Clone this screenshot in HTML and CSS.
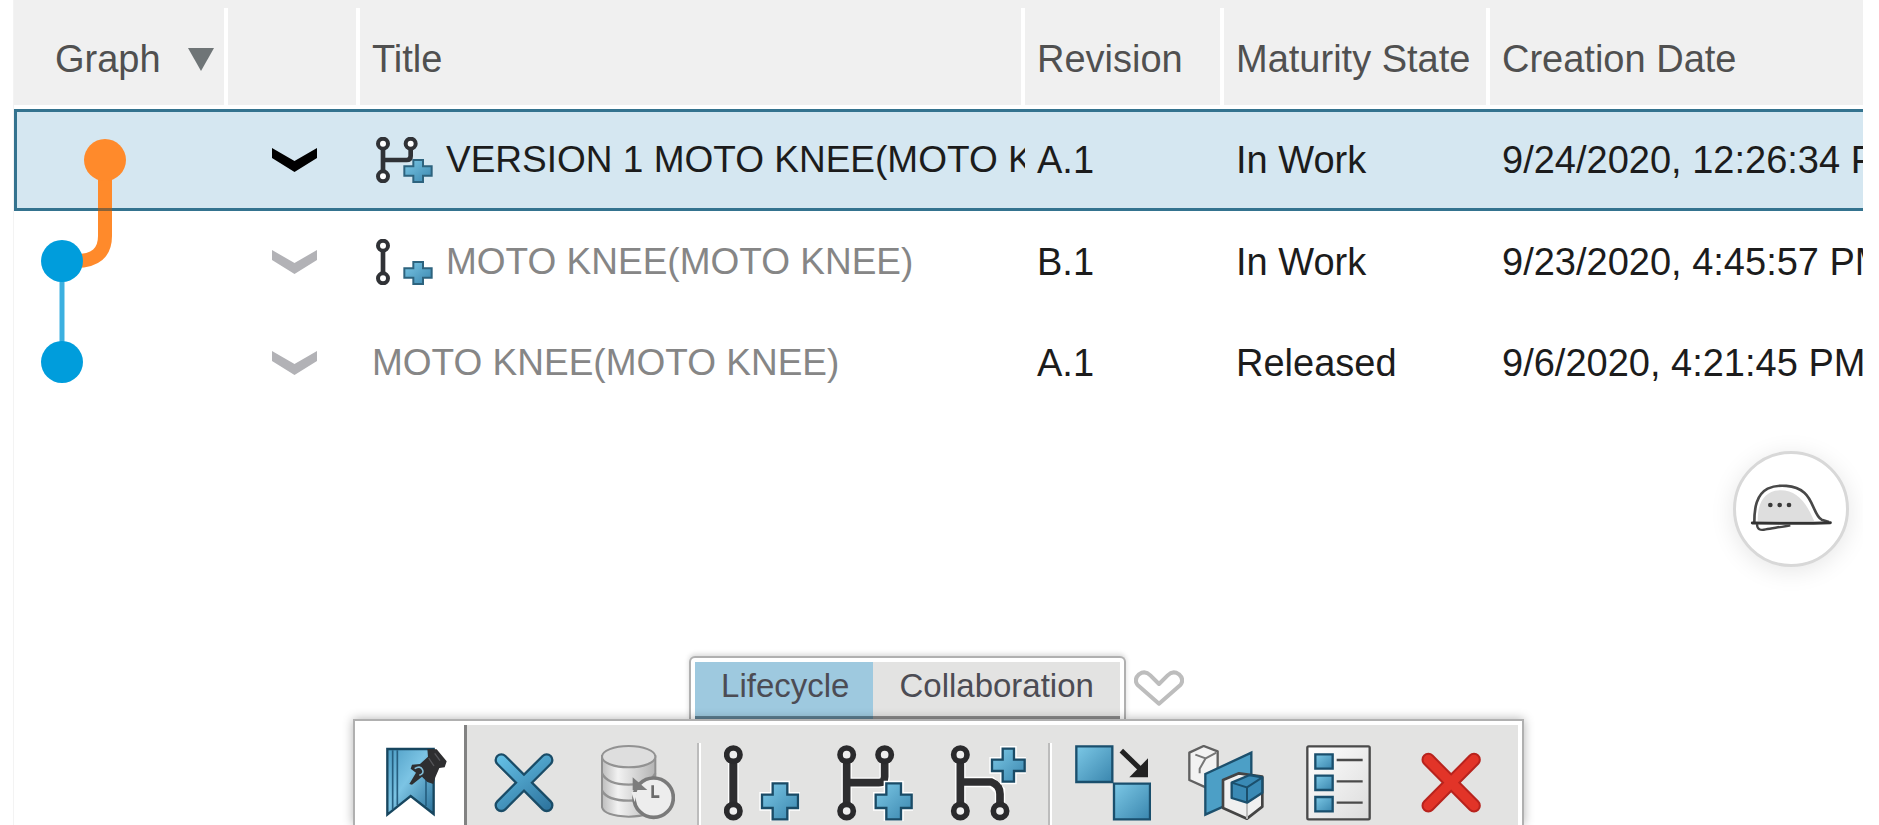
FILE: index.html
```html
<!DOCTYPE html>
<html lang="en">
<head>
<meta charset="utf-8">
<title>Revisions</title>
<link rel="stylesheet" href="styles.css">
</head>
<body>
<svg class="defs" aria-hidden="true">
  <defs>
    <linearGradient id="blue" x1="0" y1="0" x2="1" y2="1"><stop offset="0" stop-color="#7cc8e6"/><stop offset="1" stop-color="#3a86ae"/></linearGradient>
    <linearGradient id="cross" gradientUnits="userSpaceOnUse" x1="490" y1="340" x2="610" y2="515"><stop offset="0" stop-color="#64c0e6"/><stop offset="1" stop-color="#2f76a0"/></linearGradient>
    <linearGradient id="ribbon" x1="0" y1="0" x2="1" y2="1"><stop offset="0" stop-color="#4c9cc4"/><stop offset=".45" stop-color="#7cc4e4"/><stop offset="1" stop-color="#2a7099"/></linearGradient>
    <linearGradient id="steel" x1="0" y1="0" x2="1" y2="0"><stop offset="0" stop-color="#bdbdbd"/><stop offset=".3" stop-color="#f2f2f2"/><stop offset="1" stop-color="#b4b4b4"/></linearGradient>
    <linearGradient id="paper" x1="0" y1="0" x2="1" y2="1"><stop offset="0" stop-color="#ffffff"/><stop offset="1" stop-color="#dcdcdc"/></linearGradient>
    <symbol id="chevron" viewBox="0 0 45 24"><path d="M0 0 22.500 13 45 0V10L22.500 24 0 10Z" fill="currentColor"/></symbol>
  </defs>
</svg>
<main class="panel">
  <table class="grid">
    <colgroup><col class="c-graph"><col class="c-menu"><col class="c-title"><col class="c-rev"><col class="c-state"><col></colgroup>
    <thead>
      <tr>
        <th class="graph-head"><button class="sort" type="button">Graph<svg width="26" height="23" viewBox="0 0 26 23" aria-hidden="true"><path d="M0 0H26L13 23Z" fill="#6f7577"/></svg></button></th>
        <th></th><th>Title</th><th>Revision</th><th>Maturity State</th><th>Creation Date</th>
      </tr>
    </thead>
    <tbody>
      <tr class="selected">
        <td class="graph">
          <svg class="tree" width="210" height="303" viewBox="13 109 210 303" role="img" aria-label="Revision graph">
            <path d="M62 261V362" stroke="#3cb0e0" stroke-width="5"/>
            <path d="M105 160V236Q105 261 76 261" fill="none" stroke="#ff8a2b" stroke-width="14"/>
            <path d="M98 209.500H112" stroke="#8a6238" stroke-width="3"/>
            <circle cx="105" cy="160" r="21" fill="#ff8a2b"/>
            <circle cx="62" cy="261" r="21" fill="#009ddc"/>
            <circle cx="62" cy="362" r="21" fill="#009ddc"/>
          </svg>
        </td>
        <td class="menu"><button type="button" aria-label="Row menu"><svg width="45" height="24"><use href="#chevron"/></svg></button></td>
        <td><div class="title"><svg width="62" height="46" viewBox="41 55 186 138" aria-hidden="true">
          <path d="M74 82V166M74 124H145Q157 124 157 112V82" fill="none" stroke="#303236" stroke-width="14"/>
          <g fill="#fff" stroke="#303236" stroke-width="12"><circle cx="74" cy="75" r="15"/><circle cx="157" cy="75" r="15"/><circle cx="74" cy="173" r="15"/></g>
          <path d="M165 124H194V143H220V171H194V190H165V171H138V143H165Z" fill="url(#blue)" stroke="#2d637e" stroke-width="6"/>
        </svg><span>VERSION 1 MOTO KNEE(MOTO KNEE)</span></div></td>
        <td>A.1</td><td>In Work</td><td>9/24/2020, 12:26:34 PM</td>
      </tr>
      <tr class="muted">
        <td></td>
        <td class="menu"><button type="button" aria-label="Row menu"><svg width="45" height="24"><use href="#chevron"/></svg></button></td>
        <td><div class="title"><svg width="62" height="46" viewBox="41 55 186 138" aria-hidden="true">
          <path d="M74 82V166" stroke="#303236" stroke-width="14"/>
          <g fill="#fff" stroke="#303236" stroke-width="12"><circle cx="74" cy="75" r="15"/><circle cx="74" cy="173" r="15"/></g>
          <path d="M165 124H194V143H220V171H194V190H165V171H138V143H165Z" fill="url(#blue)" stroke="#2d637e" stroke-width="6"/>
        </svg><span>MOTO KNEE(MOTO KNEE)</span></div></td>
        <td>B.1</td><td>In Work</td><td>9/23/2020, 4:45:57 PM</td>
      </tr>
      <tr class="muted">
        <td></td>
        <td class="menu"><button type="button" aria-label="Row menu"><svg width="45" height="24"><use href="#chevron"/></svg></button></td>
        <td><div class="title"><span>MOTO KNEE(MOTO KNEE)</span></div></td>
        <td>A.1</td><td>Released</td><td>9/6/2020, 4:21:45 PM</td>
      </tr>
    </tbody>
  </table>

  <button class="helper" type="button" aria-label="Assistant">
    <svg width="110" height="110" viewBox="167 100 330 330" aria-hidden="true">
      <path d="M222 305C222 262 228 222 262 204C292 190 344 192 372 216C400 240 402 286 424 297L448 302V309H222Z" fill="#fff"/>
      <path d="M232 302C232 262 240 222 284 210C340 202 372 232 402 302Z" fill="#dedede"/>
      <path d="M222 305C222 262 228 222 262 204C292 190 344 192 372 216C400 240 402 286 424 297L446 304" fill="none" stroke="#484848" stroke-width="8"/>
      <path d="M216 307L400 308L450 306" fill="none" stroke="#333" stroke-width="9" stroke-linecap="round"/>
      <path d="M230 310C230 326 240 330 256 326C280 322 308 318 330 314" fill="none" stroke="#444" stroke-width="7"/>
      <g fill="#3a3a3a"><circle cx="270" cy="253" r="7"/><circle cx="298" cy="253" r="7"/><circle cx="326" cy="253" r="7"/></g>
    </svg>
  </button>

  <section class="dock">
    <div class="tabrow">
      <div class="tabs" role="tablist">
        <button class="tab active" role="tab" aria-selected="true" type="button">Lifecycle</button>
        <button class="tab" role="tab" aria-selected="false" type="button">Collaboration</button>
      </div>
      <button class="more" type="button" aria-label="More">
        <svg width="50" height="36" viewBox="279 88 150 108"><path d="M354 189L289 132Q278 116 294 101Q312 88 328 104L354 130L380 104Q396 88 414 101Q430 116 419 132Z" fill="#fff" stroke="#bdbdbd" stroke-width="12" stroke-linejoin="round"/></svg>
      </button>
    </div>
    <div class="tools" role="toolbar" aria-label="Lifecycle">
      <button class="tool pinned" type="button" aria-label="Pin"><svg viewBox="99 315 228 228">
        <path d="M142 327H281V522L212 468L142 524Z" fill="url(#ribbon)" stroke="#17465f" stroke-width="7"/>
        <path d="M158 331V508M172 331V496M258 420V498" stroke="#265f80" stroke-width="5"/>
        <path d="M262 327L290 328L320 364L314 382L298 384L286 412L280 432L262 426L246 410L216 434L208 432L228 398L212 386L216 374L240 372L264 350Z" fill="#2e2e30"/>
        <path d="M224 386Q240 376 247 388T238 406" fill="none" stroke="#83bdd7" stroke-width="5"/>
        <path d="M266 354L282 378M284 340L300 362" stroke="#56565a" stroke-width="4"/>
      </svg></button>
      <div class="group">
        <button class="tool" type="button" aria-label="Cancel"><svg viewBox="441 315 228 228">
          <path d="M487 360L623 496M623 360L487 496" stroke="#1a4c67" stroke-width="41" stroke-linecap="round"/>
          <path d="M487 360L623 496M623 360L487 496" stroke="url(#cross)" stroke-width="27" stroke-linecap="round"/>
        </svg></button>
        <button class="tool" type="button" aria-label="History"><svg viewBox="789 315 228 228">
          <path d="M798 348V502Q805 528 878 530Q950 528 958 502V348Z" fill="url(#steel)" stroke="#909090" stroke-width="6"/>
          <path d="M798 400Q814 434 878 434T958 400M798 452Q814 482 878 482T958 452" fill="none" stroke="#929292" stroke-width="7"/>
          <ellipse cx="878" cy="350" rx="80" ry="32" fill="#dedede" stroke="#929292" stroke-width="6"/>
          <circle cx="953" cy="473" r="59" fill="#ededed" stroke="#7a7a7a" stroke-width="11"/>
          <path d="M890 412V450H934Z" fill="#7c7c7c"/><path d="M886 456H904L896 486Z" fill="#ededed"/>
          <path d="M950 436V470H970" fill="none" stroke="#6c6c6c" stroke-width="8"/>
        </svg></button>
      </div>
      <div class="group">
        <button class="tool" type="button" aria-label="New version"><svg viewBox="141 315 228 228">
          <path d="M169 352V504" stroke="#fff" stroke-width="32"/><path d="M169 352V504" stroke="#2e2e30" stroke-width="24"/>
          <g fill="#eee" stroke="#2a2a2c" stroke-width="17"><circle cx="169" cy="344" r="20"/><circle cx="169" cy="513" r="20"/></g>
          <path d="M287 430H331V464H363V504H331V538H287V504H255V464H287Z" fill="url(#blue)" stroke="#fff" stroke-width="16"/>
          <path d="M287 430H331V464H363V504H331V538H287V504H255V464H287Z" fill="url(#blue)" stroke="#1a4b66" stroke-width="7"/>
        </svg></button>
        <button class="tool" type="button" aria-label="New branch"><svg viewBox="474 315 228 228">
          <path d="M503 352V504M503 428H600Q617 428 617 410V352" fill="none" stroke="#fff" stroke-width="31"/>
          <path d="M503 352V504M503 428H600Q617 428 617 410V352" fill="none" stroke="#2e2e30" stroke-width="23"/>
          <g fill="#eee" stroke="#2a2a2c" stroke-width="17"><circle cx="503" cy="344" r="20"/><circle cx="617" cy="344" r="20"/><circle cx="503" cy="513" r="20"/></g>
          <path d="M622 430H666V464H698V504H666V538H622V504H590V464H622Z" fill="url(#blue)" stroke="#fff" stroke-width="16"/>
          <path d="M622 430H666V464H698V504H666V538H622V504H590V464H622Z" fill="url(#blue)" stroke="#1a4b66" stroke-width="7"/>
        </svg></button>
        <button class="tool" type="button" aria-label="New from branch"><svg viewBox="816 315 228 228">
          <path d="M847 352V504M847 426H940L966 452V504" fill="none" stroke="#fff" stroke-width="31"/>
          <path d="M847 352V504M847 426H940Q966 436 966 462V504" fill="none" stroke="#2e2e30" stroke-width="23"/>
          <g fill="#eee" stroke="#2a2a2c" stroke-width="17"><circle cx="847" cy="344" r="20"/><circle cx="847" cy="513" r="20"/><circle cx="966" cy="513" r="20"/></g>
          <path d="M974 326H1008V359H1040V393H1008V425H974V393H942V359H974Z" fill="url(#blue)" stroke="#fff" stroke-width="16"/>
          <path d="M974 326H1008V359H1040V393H1008V425H974V393H942V359H974Z" fill="url(#blue)" stroke="#1a4b66" stroke-width="7"/>
        </svg></button>
      </div>
      <div class="group">
        <button class="tool" type="button" aria-label="Replace"><svg viewBox="111 315 228 228">
          <g fill="url(#blue)" stroke="#1a4f6d" stroke-width="7"><path d="M115 319H223V426H115Z"/><path d="M228 431H336V538H228Z"/></g>
          <path d="M250 332L308 388" stroke="#222" stroke-width="15"/><path d="M330 355V412H274Z" fill="#222"/>
        </svg></button>
        <button class="tool" type="button" aria-label="Duplicate"><svg viewBox="447 315 228 228">
          <path d="M451 338L494 318L536 334V420L500 442L451 420Z" fill="#f2f2f2" stroke="#606060" stroke-width="7" stroke-linejoin="round"/>
          <path d="M469 344L500 355L532 338M500 355L482 386V400" fill="none" stroke="#777" stroke-width="6"/>
          <path d="M499 402L637 338V462L499 524Z" fill="#4c9fc6" stroke="#1c506d" stroke-width="7"/>
          <path d="M552 420L600 400L670 410V500L624 536L552 504Z" fill="#f0f0f0" stroke="#444" stroke-width="8" stroke-linejoin="round"/>
          <path d="M624 490V536" stroke="#bdbdbd" stroke-width="6"/>
          <path d="M578 428L632 405L670 412V458L624 488L578 474Z" fill="#3a8ab5" stroke="#1b4f6c" stroke-width="7" stroke-linejoin="round"/>
          <path d="M578 428L624 442L670 412M624 442V486" fill="none" stroke="#1b4f6c" stroke-width="6"/>
        </svg></button>
        <button class="tool" type="button" aria-label="Properties"><svg viewBox="783 315 228 228">
          <rect x="802" y="319" width="187" height="219" rx="4" fill="url(#paper)" stroke="#4a4a4a" stroke-width="7"/>
          <g fill="url(#blue)" stroke="#1a4f6d" stroke-width="7"><path d="M826 343H878V386H826Z"/><path d="M826 407H878V450H826Z"/><path d="M826 471H878V514H826Z"/></g>
          <path d="M890 360H968M890 424H968M890 488H968" stroke="#4a4a4a" stroke-width="7"/>
        </svg></button>
        <button class="tool" type="button" aria-label="Delete"><svg viewBox="1119 315 228 228">
          <path d="M1162 359L1299 497M1299 359L1162 497" stroke="#b8231d" stroke-width="41" stroke-linecap="round"/>
          <path d="M1162 359L1299 497M1299 359L1162 497" stroke="#e23428" stroke-width="29" stroke-linecap="round"/>
        </svg></button>
      </div>
    </div>
  </section>
</main>
</body>
</html>
```
FILE: styles.css
```css
* { box-sizing: border-box; }
body {
  margin: 0;
  background: #fff;
  color: #1c1c1c;
  font: 38px/44px "Liberation Sans", Arial, sans-serif;
}
button {
  margin: 0;
  padding: 0;
  border: 0;
  background: none;
  color: inherit;
  font: inherit;
}
svg { display: block; flex: none; }
.defs { position: absolute; width: 0; height: 0; }

.panel {
  display: flex;
  flex-direction: column;
  min-height: 100vh;
  margin: 0 16px 0 13px;
  border-left: 1px solid #f3f3f3;
  overflow: hidden;
}

.grid {
  width: 100%;
  table-layout: fixed;
  border-collapse: separate;
  border-spacing: 0;
}
.c-graph { width: 214px; }
.c-menu { width: 132px; }
.c-title { width: 665px; }
.c-rev { width: 199px; }
.c-state { width: 266px; }

th, td {
  padding: 0 0 0 12px;
  text-align: left;
  white-space: nowrap;
  overflow: hidden;
}
th {
  height: 109px;
  padding-top: 13px;
  border-bottom: 4px solid #fff;
  background: linear-gradient(#fff, #fff) no-repeat right bottom / 4px 97px, #f0f0f0;
  background-clip: padding-box;
  color: #505050;
  font-weight: 400;
}
th:last-child { background: #f0f0f0 padding-box; }
.graph-head { padding-left: 41px; }
.sort { display: flex; align-items: center; gap: 27px; }

td { height: 101px; }
.selected td {
  height: 102px;
  border-top: 3px solid #34738f;
  border-bottom: 3px solid #34738f;
  background: #d5e7f1;
}
.selected .graph {
  position: relative;
  overflow: visible;
  border-left: 3px solid #34738f;
}
.tree { position: absolute; top: -3px; left: -4px; }

.menu { padding: 0; }
.menu button { display: block; margin: 0 auto; color: #000; }
.muted .menu button { color: #b2b2b6; }
.title {
  display: flex;
  align-items: center;
  gap: 12px;
  font-size: 37px;
}
.muted .title { color: #868686; }

.helper {
  align-self: flex-end;
  margin: 38px 14px 0 0;
  border: 3px solid #d8d8d8;
  border-radius: 50%;
  background: #fff;
  box-shadow: 0 4px 24px rgba(0, 0, 0, .1);
}

.dock {
  display: flex;
  flex-direction: column;
  align-items: center;
  margin-top: auto;
}
.tabrow { display: flex; align-items: center; gap: 8px; padding-right: 4px; }
.tabs {
  display: flex;
  padding: 4px 4px 0;
  border: 2px solid #b0b0b0;
  border-bottom: 0;
  border-radius: 6px 6px 0 0;
  background: #fff;
  box-shadow: 0 -2px 5px rgba(0, 0, 0, .15);
}
.tab {
  height: 57px;
  padding: 0 26px 6px;
  border-bottom: 3px solid #8c8c8c;
  background: #e3e3e2;
  color: #4c4c54;
  font-size: 33px;
}
.tab.active { padding-right: 24px; background: #9ec9df; border-color: #5d7f91; }
.tools {
  display: flex;
  padding: 4px 10px 0 0;
  border: 2px solid #b0b0b0;
  border-bottom: 0;
  background: #e3e3e2;
  box-shadow: inset -4px 4px #fff, 0 0 10px rgba(0, 0, 0, .3);
}
.tool { width: 112px; padding: 20px 18px 4px; }
.tool svg { width: 76px; height: 76px; }
.pinned { background: #fff; border-right: 3px solid #828282; }
.group { display: flex; gap: 1px; padding: 0 4px 0 1px; }
.group + .group {
  padding-left: 9px;
  background: linear-gradient(90deg, #bcbcbc 2px, #fff 2px, #fff 4px, transparent 4px) no-repeat left bottom / 4px 82px;
}
```
